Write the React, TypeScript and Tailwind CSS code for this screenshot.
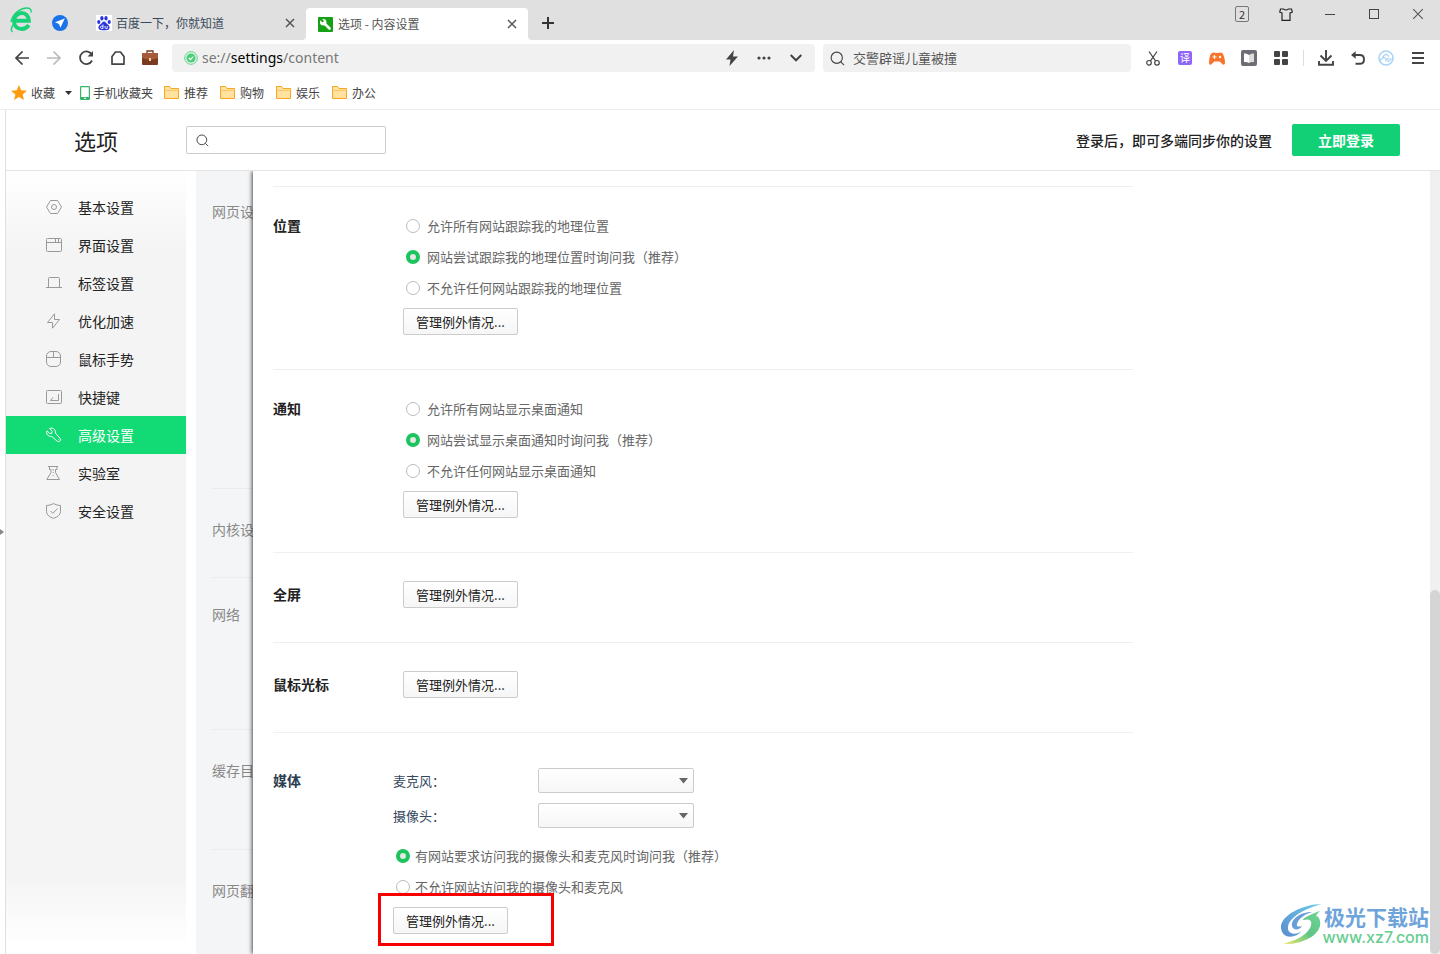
import { ReactNode } from "react";
import clsx from "clsx";

interface RadioOption {
  label: string;
  checked?: boolean;
}

const BOOKMARKS = ["推荐", "购物", "娱乐", "办公"];

const NAV_ITEMS: Array<{ label: string; icon: ReactNode; active?: boolean }> = [
  {
    label: "基本设置",
    icon: (
      <>
        <path d="M4.5 1.5h7L15.5 8l-4 6.5h-7L.5 8z" />
        <circle cx="8" cy="8" r="2.5" />
      </>
    ),
  },
  {
    label: "界面设置",
    icon: (
      <>
        <rect x=".5" y="1.5" width="15" height="13" rx="1" />
        <path d="M1 5.5h14M9.5 2v3M12.5 2v3" />
      </>
    ),
  },
  {
    label: "标签设置",
    icon: <path d="M0 12.5h16M2.500 12.500V3.500q0-1 1-1h9q1 0 1 1v9" />,
  },
  {
    label: "优化加速",
    icon: <path d="M8.500 .8 1.500 9.500h5v5.700L13.500 6.500h-5z" />,
  },
  {
    label: "鼠标手势",
    icon: (
      <>
        <rect x=".5" y=".5" width="14" height="15" rx="4.500" />
        <path d="M.5 6.500h14M7.500 1v5.500" />
      </>
    ),
  },
  {
    label: "快捷键",
    icon: (
      <>
        <rect x=".5" y="1.500" width="15" height="13" rx="1" />
        <path d="M12.500 5v6.500h-8M7 8.500l-2.500 3" />
      </>
    ),
  },
  {
    label: "高级设置",
    active: true,
    icon: (
      <path d="M3.500 1.500 6.200 4.200 5.800 6.200 3.800 6.500 1 3.800C-.2 6.500 2 10 5.800 9.500L11.200 14.200C13 15.500 15.600 13.500 14.200 11.500L9.500 6.200C10 2.600 6.800 .2 3.500 1.500zM12.500 12.500h.6" />
    ),
  },
  {
    label: "实验室",
    icon: (
      <>
        <path d="M2 1.500h10M3.500 1.500v3h1.500v3L.8 14.500h12.700L9.500 7.500v-3H11v-3" />
        <path d="M7.200 4v1.500M7.200 7v1M7.200 10v1" />
      </>
    ),
  },
  {
    label: "安全设置",
    icon: (
      <>
        <path d="M7.500 .6Q11 2.500 14.500 2.500v6q0 4.500-7 6.900-7-2.400-7-6.900v-6Q4 2.500 7.500 .6z" />
        <path d="M4.500 8l2.300 2.300L11.500 5.500" />
      </>
    ),
  },
];

const UNDERLAY_SECTIONS = [
  { label: "网页设置", size: "h-[318px] pt-7" },
  { label: "内核设置", size: "h-[89px] pt-7" },
  { label: "网络", size: "h-[152px] pt-6" },
  { label: "缓存目录", size: "h-[120px] pt-7" },
  { label: "网页翻译", size: "flex-1 pt-7" },
];

const LOCATION_OPTIONS: RadioOption[] = [
  { label: "允许所有网站跟踪我的地理位置" },
  { label: "网站尝试跟踪我的地理位置时询问我（推荐）", checked: true },
  { label: "不允许任何网站跟踪我的地理位置" },
];

const NOTICE_OPTIONS: RadioOption[] = [
  { label: "允许所有网站显示桌面通知" },
  { label: "网站尝试显示桌面通知时询问我（推荐）", checked: true },
  { label: "不允许任何网站显示桌面通知" },
];

const MEDIA_OPTIONS: RadioOption[] = [
  { label: "有网站要求访问我的摄像头和麦克风时询问我（推荐）", checked: true },
  { label: "不允许网站访问我的摄像头和麦克风" },
];

function IconButton({
  label,
  className = "w-8",
  children,
}: {
  label: string;
  className?: string;
  children: ReactNode;
}) {
  return (
    <button
      type="button"
      aria-label={label}
      className={clsx("flex h-7 shrink-0 items-center justify-center", className)}
    >
      {children}
    </button>
  );
}

function SearchIcon({ size }: { size: number }) {
  return (
    <svg width={size} height={size} viewBox="0 0 16 16" fill="none" stroke="#444" strokeWidth="1.2" className="shrink-0">
      <circle cx="7.200" cy="7.200" r="6" />
      <path d="M11.500 11.500 15 15" />
    </svg>
  );
}

function CloseIcon({ size, width = 1.5 }: { size: number; width?: number }) {
  return (
    <svg width={size} height={size} viewBox="0 0 10 10" stroke="#555" strokeWidth={width}>
      <path d="M1 1l8 8M9 1 1 9" />
    </svg>
  );
}

function TabStrip() {
  return (
    <div className="flex h-10 bg-white">
      <div className="flex w-[306px] shrink-0 items-center rounded-br bg-[#e0e0e0] pl-[10px]">
        <svg width="24" height="26" viewBox="0 0 24 26" fill="none" className="shrink-0">
          <path d="M5.500 13.800H18.800C18.500 8.500 15.500 6 11.800 6 7.500 6 4 9.500 4 14.200S7.300 22 11.800 22c3 0 5.300-1.300 7-3.800" stroke="#19d278" strokeWidth="4" />
          <path d="M1 15C2.500 6.500 11 .5 17.500 1c3 .3 4 2 3.500 4.500M3.500 17.500C.5 21.500 1 24 2.500 25" stroke="#19d278" strokeWidth="1.400" />
        </svg>
        <svg width="16" height="16" viewBox="0 0 16 16" className="ml-[18px] mt-[6px] shrink-0">
          <circle cx="8" cy="8" r="8" fill="#1a73e8" />
          <path d="M12.800 3.500 3 7.300l4 1.600 1.400 3.900z" fill="#fff" />
        </svg>
        <div className="ml-7 mt-[6px] flex flex-1 items-center gap-1 pr-[11px]">
          <svg width="16" height="16" viewBox="0 0 16 16" fill="#2932e1" className="shrink-0">
            <rect width="16" height="16" rx="1" fill="#fff" />
            <ellipse cx="2.800" cy="7" rx="1.600" ry="2.100" />
            <ellipse cx="5.900" cy="3.200" rx="1.600" ry="2.200" />
            <ellipse cx="10" cy="3.200" rx="1.600" ry="2.200" />
            <ellipse cx="13.200" cy="7" rx="1.600" ry="2.100" />
            <path d="M8 6.500c1.500 0 2 1.500 3.200 2.600 1.400 1.200 2.600 2 2.300 4-.3 1.700-2 2.400-5.500 2.100-3.500.3-5.200-.4-5.500-2.100-.3-2 .9-2.800 2.300-4C6 8 6.500 6.500 8 6.500z" />
            <path d="M7 9.500v4H5.500q-1 0-1-1.200t1-1.200H7M9 11v1.500q0 1 1.200 1h1V11" fill="none" stroke="#fff" strokeWidth=".9" />
          </svg>
          <span className="flex-1 text-xs text-[#3b4a5a]">百度一下，你就知道</span>
          <button type="button" aria-label="关闭标签">
            <CloseIcon size={10} />
          </button>
        </div>
      </div>

      <div className="w-[222px] shrink-0 bg-[#e0e0e0] pt-2">
        <div className="flex h-8 items-center gap-[5px] rounded-t bg-white pl-3 pr-[11px]">
          <svg width="15" height="15" viewBox="0 0 15 15" className="shrink-0">
            <rect width="15" height="15" rx="1" fill="#16a016" />
            <path d="M5.500 5.500 11.500 11.500" stroke="#fff" strokeWidth="2.600" strokeLinecap="round" />
            <circle cx="5.200" cy="5.200" r="3.200" fill="#fff" />
            <path d="M2 1.500 5.300 4.800" stroke="#16a016" strokeWidth="2" />
          </svg>
          <span className="flex-1 text-xs text-[#555]">选项 - 内容设置</span>
          <button type="button" aria-label="关闭标签">
            <CloseIcon size={10} />
          </button>
        </div>
      </div>

      <div className="flex flex-1 items-start rounded-bl bg-[#e0e0e0]">
        <IconButton label="新建标签" className="ml-1 mt-[9px] w-8">
          <svg width="12" height="12" viewBox="0 0 12 12" stroke="#333" strokeWidth="2">
            <path d="M6 0v12M0 6h12" />
          </svg>
        </IconButton>
        <div className="ml-auto flex">
          <IconButton label="窗口数" className="w-11">
            <span className="flex h-4 w-[14px] items-center justify-center rounded-xs border border-[#777] text-[11px] leading-none text-[#333]">
              2
            </span>
          </IconButton>
          <IconButton label="皮肤" className="w-11">
            <svg width="14" height="13" viewBox="0 0 14 13" fill="none" stroke="#222" strokeWidth="1.200">
              <path d="M4.500 1h-3L.7 4.200 3 5v7.300h8V5l2.300-.8L12.500 1h-3Q7 3 4.500 1z" />
            </svg>
          </IconButton>
          <IconButton label="最小化" className="w-11">
            <svg width="10" height="10" viewBox="0 0 10 10" stroke="#444">
              <path d="M0 5.500h10" />
            </svg>
          </IconButton>
          <IconButton label="最大化" className="w-11">
            <svg width="10" height="10" viewBox="0 0 10 10" fill="none" stroke="#444">
              <rect x=".5" y=".5" width="9" height="9" />
            </svg>
          </IconButton>
          <IconButton label="关闭" className="w-11">
            <CloseIcon size={12} width={0.9} />
          </IconButton>
        </div>
      </div>
    </div>
  );
}

function Toolbar() {
  return (
    <div className="flex h-9 items-center pl-[6px] pr-[2px]">
      <IconButton label="后退">
        <svg width="14" height="14" viewBox="0 0 14 14" fill="none" stroke="#444" strokeWidth="1.700">
          <path d="M14 7H1M7.500 .5 1 7l6.500 6.500" />
        </svg>
      </IconButton>
      <IconButton label="前进">
        <svg width="14" height="14" viewBox="0 0 14 14" fill="none" stroke="#bbb" strokeWidth="1.700">
          <path d="M0 7h13M6.500 .5 13 7l-6.500 6.500" />
        </svg>
      </IconButton>
      <IconButton label="刷新">
        <svg width="16" height="16" viewBox="0 0 16 16" fill="none" stroke="#444" strokeWidth="1.800">
          <path d="M14 5A6.300 6.300 0 1 0 14 10.500" />
          <path d="M15 1v5.500H9.500z" fill="#444" stroke="none" />
        </svg>
      </IconButton>
      <IconButton label="主页">
        <svg width="14" height="14" viewBox="0 0 14 14" fill="none" stroke="#444" strokeWidth="1.700">
          <path d="M1 13.200V5.500L4.500 1h5L13 5.500v7.700z" strokeLinejoin="round" />
        </svg>
      </IconButton>
      <IconButton label="工具箱">
        <svg width="16" height="16" viewBox="0 0 16 16">
          <path d="M5 3V1h6v2" fill="none" stroke="#7a3b23" strokeWidth="1.300" />
          <rect y="3" width="16" height="12" rx="1" fill="#7a3b23" />
          <path d="M0 4q0-1 1-1h14q1 0 1 1v4q-8 3-16 0z" fill="#a55a3c" />
          <rect x="7" y="8" width="2" height="3" fill="#f5d58a" />
        </svg>
      </IconButton>

      <div className="ml-[6px] flex h-7 flex-1 items-center rounded bg-[#f1f1f1] pl-3 pr-[3px]">
        <svg width="14" height="14" viewBox="0 0 14 14" fill="none" className="shrink-0">
          <circle cx="7" cy="7" r="6.300" stroke="#5cd685" strokeWidth="1" />
          <circle cx="7" cy="7" r="4.600" fill="#4ccf7a" />
          <path d="M4.800 7l1.600 1.600L9.300 5.700" stroke="#fff" strokeWidth="1.200" />
        </svg>
        <div role="textbox" aria-label="地址栏" className="ml-1 flex-1 font-['Noto_Sans','Open_Sans',sans-serif] text-sm text-[#777]">
          se://<span className="text-black">settings</span>/content
        </div>
        <IconButton label="极速模式">
          <svg width="12" height="16" viewBox="0 0 12 16" fill="#444">
            <path d="M8 0 0 9.500h4.500L3.500 16 12 6.500H7z" />
          </svg>
        </IconButton>
        <IconButton label="更多">
          <svg width="14" height="4" viewBox="0 0 14 4" fill="#444">
            <circle cx="2" cy="2" r="1.600" />
            <circle cx="7" cy="2" r="1.600" />
            <circle cx="12" cy="2" r="1.600" />
          </svg>
        </IconButton>
        <IconButton label="展开地址栏">
          <svg width="12" height="8" viewBox="0 0 12 8" fill="none" stroke="#444" strokeWidth="2">
            <path d="M.7 1 6 6.300 11.300 1" />
          </svg>
        </IconButton>
      </div>

      <label className="ml-2 flex h-7 w-[308px] items-center gap-2 rounded bg-[#f1f1f1] px-[7px]">
        <SearchIcon size={15} />
        <input
          type="text"
          aria-label="搜索"
          placeholder="交警辟谣儿童被撞"
          className="min-w-0 flex-1 bg-transparent text-[13px] outline-none placeholder:text-[#555]"
        />
      </label>

      <div className="ml-[6px] flex items-center">
        <IconButton label="截图">
          <svg width="14" height="15" viewBox="0 0 14 15" fill="none" stroke="#444" strokeWidth="1.200">
            <path d="M3 .5 9.500 9.800M11 .5 4.500 9.800" />
            <circle cx="3" cy="11.800" r="2.300" />
            <circle cx="11" cy="11.800" r="2.300" />
          </svg>
        </IconButton>
        <IconButton label="翻译">
          <span className="flex h-[14px] w-[14px] items-center justify-center rounded-xs bg-[#8f66f5] text-[10px] leading-none text-white">
            译
          </span>
        </IconButton>
        <IconButton label="游戏">
          <svg width="16" height="13" viewBox="0 0 16 13">
            <path d="M3.500 .8Q5.500 0 6.500 1h3q1-1 3-.2C14.800 2 16 7 16 11q0 2-2 1.800L10.800 9.500H5.200L2 12.800Q0 13 0 11 0 7 1.200 3.200 2 1.400 3.500 .8z" fill="#f9732a" />
            <path d="M3.500 5h4M5.500 3v4" stroke="#fff" strokeWidth="1.100" />
            <circle cx="11" cy="5" r="1.200" fill="#fff" />
          </svg>
        </IconButton>
        <IconButton label="阅读">
          <svg width="16" height="16" viewBox="0 0 16 16">
            <rect width="16" height="16" rx="2" fill="#6c6d75" />
            <path d="M3 3.500Q6 3 8 5v8Q6 11.500 3 12z" fill="#fff" />
            <path d="M13 3.500Q10 3 8 5v8q2-1.500 5-1z" fill="#ddd" />
          </svg>
        </IconButton>
        <IconButton label="扩展">
          <svg width="14" height="14" viewBox="0 0 14 14" fill="#444">
            <rect width="6" height="6" rx="1" />
            <rect x="8" width="6" height="6" rx="1" />
            <rect y="8" width="6" height="6" rx="1" />
            <rect x="8" y="8" width="6" height="6" rx="1" />
          </svg>
        </IconButton>
        <div className="mx-[6px] h-4 w-px bg-[#ddd]" />
        <IconButton label="下载">
          <svg width="16" height="16" viewBox="0 0 16 16" fill="none" stroke="#444" strokeWidth="1.900">
            <path d="M8 0v10.500M2.500 5.500 8 11l5.500-5.500M1 11v3.800h14V11" />
          </svg>
        </IconButton>
        <IconButton label="恢复标签">
          <svg width="14" height="14" viewBox="0 0 14 14" fill="none" stroke="#444" strokeWidth="1.900">
            <path d="M1.500 4h7.200q4.300 0 4.300 4.400 0 4.400-4.300 4.400H4.500" />
            <path d="M0 4 4.700 .2v7.600z" fill="#444" stroke="none" />
          </svg>
        </IconButton>
        <IconButton label="账号" className="w-6">
          <svg width="16" height="16" viewBox="0 0 16 16" fill="none" stroke="#a9d3f8">
            <circle cx="8" cy="8" r="7" strokeWidth="1.600" />
            <path d="M2 10.500 5.500 7 8 8.500v2L11 8M5 8.500V6.500l3-2.500 3 2.500M9.500 12l4-3.500" strokeWidth="1.200" />
          </svg>
        </IconButton>
        <IconButton label="菜单" className="w-10">
          <svg width="12" height="12" viewBox="0 0 12 12" stroke="#444" strokeWidth="2">
            <path d="M0 1h12M0 6h12M0 11h12" />
          </svg>
        </IconButton>
      </div>
    </div>
  );
}

function BookmarkBar() {
  return (
    <nav className="flex h-[34px] items-center border-b border-[#ececec] pl-[11px] text-xs text-[#444]">
      <a href="#" className="flex items-center gap-1">
        <svg width="16" height="15" viewBox="0 0 16 15" fill="#ff9a0c">
          <path d="M8 0l2.200 5.200 5.800.5-4.400 3.700L13 15l-5-3-5 3 1.400-5.600L0 5.700l5.800-.5z" />
        </svg>
        收藏
      </a>
      <button type="button" aria-label="展开收藏" className="ml-[10px]">
        <svg width="7" height="4" viewBox="0 0 7 4" fill="#333">
          <path d="M0 0h7L3.500 4z" />
        </svg>
      </button>
      <a href="#" className="ml-2 flex items-center gap-[3px]">
        <svg width="10" height="14" viewBox="0 0 10 14" fill="none">
          <rect x=".6" y=".6" width="8.800" height="12.800" rx=".6" stroke="#35b56a" strokeWidth="1.200" />
          <path d="M1 11h8v2.500H1z" fill="#35b56a" />
          <path d="M4 12.300h2" stroke="#fff" />
        </svg>
        手机收藏夹
      </a>
      {BOOKMARKS.map((name, i) => (
        <a key={name} href="#" className={clsx("flex items-center gap-[5px]", i === 0 ? "ml-[11px]" : "ml-3")}>
          <svg width="15" height="13" viewBox="0 0 15 13" fill="#ffe1a0" stroke="#fba51c">
            <path d="M.5 .5h5l1.500 2h7.500v10H.5z" />
            <path d="M.5 4.500h14" stroke="#fbc464" />
          </svg>
          {name}
        </a>
      ))}
    </nav>
  );
}

function SettingsHeader() {
  return (
    <header className="flex h-[61px] items-center border-b border-[#e4e4e4] bg-white pr-10">
      <h1 className="w-[180px] shrink-0 pl-[68px] text-[22px] leading-8 text-[#222]">选项</h1>
      <label className="flex h-7 w-[200px] items-center gap-2 rounded-xs border border-[#ccc] px-[9px]">
        <SearchIcon size={13} />
        <input type="text" aria-label="搜索设置" className="min-w-0 flex-1 bg-transparent text-[13px] outline-none" />
      </label>
      <p className="ml-auto text-sm font-medium text-[#222]">登录后，即可多端同步你的设置</p>
      <button type="button" className="ml-5 h-8 w-[108px] rounded-xs bg-[#12d076] text-sm font-bold text-white">
        立即登录
      </button>
    </header>
  );
}

function Sidebar() {
  return (
    <nav className="w-[180px] shrink-0 bg-[linear-gradient(to_bottom,#fff,#f4f4f4_10%,#f4f4f4_90%,#fff_99%)] pt-[17px]">
      {NAV_ITEMS.map((item) => (
        <a
          key={item.label}
          href="#"
          className={clsx(
            "flex h-[38px] items-center gap-4 pl-10 text-sm",
            item.active ? "bg-[#12db75] text-white" : "text-[#222]"
          )}
        >
          <svg
            width="16"
            height="16"
            viewBox="0 0 16 16"
            fill="none"
            stroke={item.active ? "#fff" : "#999"}
            className="shrink-0"
          >
            {item.icon}
          </svg>
          {item.label}
        </a>
      ))}
    </nav>
  );
}

function ManageButton() {
  return (
    <button
      type="button"
      className="block h-[27px] w-[115px] rounded-xs border border-[#ccc] bg-linear-to-b from-white to-[#f6f6f6] text-[13px] leading-none text-[#222]"
    >
      管理例外情况...
    </button>
  );
}

function RadioGroup({ name, options, gap }: { name: string; options: RadioOption[]; gap: string }) {
  return (
    <div role="radiogroup" className="mb-[5px] pl-[3px]">
      {options.map((option) => (
        <label key={option.label} className={clsx("flex h-[31px] items-center text-[13px] text-[#666]", gap)}>
          <input
            type="radio"
            name={name}
            defaultChecked={option.checked}
            className="h-[14px] w-[14px] shrink-0 appearance-none rounded-full border border-[#bbb] bg-white checked:border-4 checked:border-[#1bc45c] checked:bg-[#e6e6e6]"
          />
          {option.label}
        </label>
      ))}
    </div>
  );
}

function Section({ title, name, options }: { title: string; name?: string; options?: RadioOption[] }) {
  return (
    <section className={clsx("flex border-t border-[#f0f0f0] pb-[34px]", options ? "pt-[23px]" : "pt-7")}>
      <h2
        className={clsx(
          "w-[130px] shrink-0 text-sm font-bold text-[#222]",
          options ? "leading-[31px]" : "leading-[27px]"
        )}
      >
        {title}
      </h2>
      <div>
        {options && name && <RadioGroup name={name} options={options} gap="gap-[7px]" />}
        <ManageButton />
      </div>
    </section>
  );
}

function DeviceSelect({ id, label }: { id: string; label: string }) {
  return (
    <div className="flex h-[25px] items-center">
      <label htmlFor={id} className="w-[145px] text-[13px] text-[#34495e]">
        {label}
      </label>
      <div className="relative">
        <select
          id={id}
          className="block h-[25px] w-[156px] appearance-none rounded-xs border border-[#ccc] bg-linear-to-b from-white to-[#f6f6f6]"
        />
        <svg width="9" height="6" viewBox="0 0 9 6" fill="#666" className="pointer-events-none absolute right-[6px] top-[10px]">
          <path d="M0 0h9L4.500 5.500z" />
        </svg>
      </div>
    </div>
  );
}

function MediaSection() {
  return (
    <section className="flex border-t border-[#f0f0f0] pb-5 pt-[35px]">
      <h2 className="w-[120px] shrink-0 text-sm font-bold leading-[25px] text-[#2c3e50]">媒体</h2>
      <div>
        <div className="mb-3 flex flex-col gap-[10px]">
          <DeviceSelect id="microphone" label="麦克风：" />
          <DeviceSelect id="camera" label="摄像头：" />
        </div>
        <RadioGroup name="media" options={MEDIA_OPTIONS} gap="gap-[5px]" />
        <div className="relative w-fit">
          <ManageButton />
          {/* highlight frame */}
          <div className="pointer-events-none absolute -left-[15px] -top-[14px] h-[53px] w-[176px] border-3 border-[#f70000]" />
        </div>
      </div>
    </section>
  );
}

function Watermark() {
  return (
    <div className="pointer-events-none absolute bottom-2 right-[11px] flex items-end opacity-90">
      <svg width="43" height="43" viewBox="0 0 43 43">
        <defs>
          <linearGradient id="swirl-blue" x1="0" y1="1" x2="1" y2="0">
            <stop offset="0" stopColor="#4a7fc8" />
            <stop offset="1" stopColor="#5cc8ea" />
          </linearGradient>
          <linearGradient id="swirl-green" x1="0" y1="1" x2="1" y2="0">
            <stop offset="0" stopColor="#f0e85a" />
            <stop offset=".5" stopColor="#4fc07a" />
            <stop offset="1" stopColor="#5fcf8a" />
          </linearGradient>
        </defs>
        <path d="M42 1C24 1 0 12 1 25c1 11 14 11 21 3-6 5-15 3-14-4C9 14 26 5 42 1z" fill="url(#swirl-blue)" />
        <path d="M32 9C20 9 11 16 12 23c1 5 8 4 10 0-3 1-6 1-5-2 1-5 8-10 15-12z" fill="#5b93d6" />
        <path d="M40 8C30 11 20 17 24 17c7-2 9 2 6 8C26 33 14 38 3 41c15 1 34-6 37-18 1-5-1-10-4-10 1-2 2-3 4-5z" fill="url(#swirl-green)" />
      </svg>
      <div className="flex flex-col items-end">
        <span className="text-[21px] font-bold leading-6 text-[#5f9bd6]">极光下载站</span>
        <span className="font-['Inter',sans-serif] text-base font-medium leading-[18px] text-[#55c884]">www.xz7.com</span>
      </div>
    </div>
  );
}

export default function App() {
  return (
    <div className="relative flex min-h-screen flex-col bg-white font-['Noto_Sans_CJK_SC',sans-serif]">
      <TabStrip />
      <Toolbar />
      <BookmarkBar />

      <div className="flex flex-1">
        <div className="flex w-[6px] shrink-0 items-center border-r border-[#e0e0e0]">
          <svg width="4" height="6" viewBox="0 0 4 6" fill="#888">
            <path d="M0 0l4 3-4 3z" />
          </svg>
        </div>

        <div className="flex min-w-0 flex-1 flex-col">
          <SettingsHeader />
          <div className="flex flex-1 overflow-hidden">
            <Sidebar />

            {/* Settings page left visible behind the drawer */}
            <div className="ml-[10px] flex w-[57px] shrink-0 flex-col overflow-hidden bg-[#f4f5f7] pl-4">
              {UNDERLAY_SECTIONS.map((section) => (
                <div
                  key={section.label}
                  className={clsx(
                    "whitespace-nowrap border-b border-[#ebecee] text-sm leading-6 text-[#888] last:border-b-0",
                    section.size
                  )}
                >
                  {section.label}
                </div>
              ))}
            </div>

            <main className="relative min-w-0 flex-1 bg-white pl-5 pr-5 pt-[15px] shadow-[-1px_0_4px_rgba(0,0,0,0.7)]">
              <div className="max-w-[860px]">
                <Section title="位置" name="location" options={LOCATION_OPTIONS} />
                <Section title="通知" name="notification" options={NOTICE_OPTIONS} />
                <Section title="全屏" />
                <Section title="鼠标光标" />
                <MediaSection />
              </div>
            </main>

            <div className="relative flex w-[10px] shrink-0 flex-col justify-end bg-[#f0f0f0]">
              <div className="h-[364px] rounded-full bg-[#d5d5d5]" />
            </div>
          </div>
        </div>
      </div>

      <Watermark />
    </div>
  );
}
